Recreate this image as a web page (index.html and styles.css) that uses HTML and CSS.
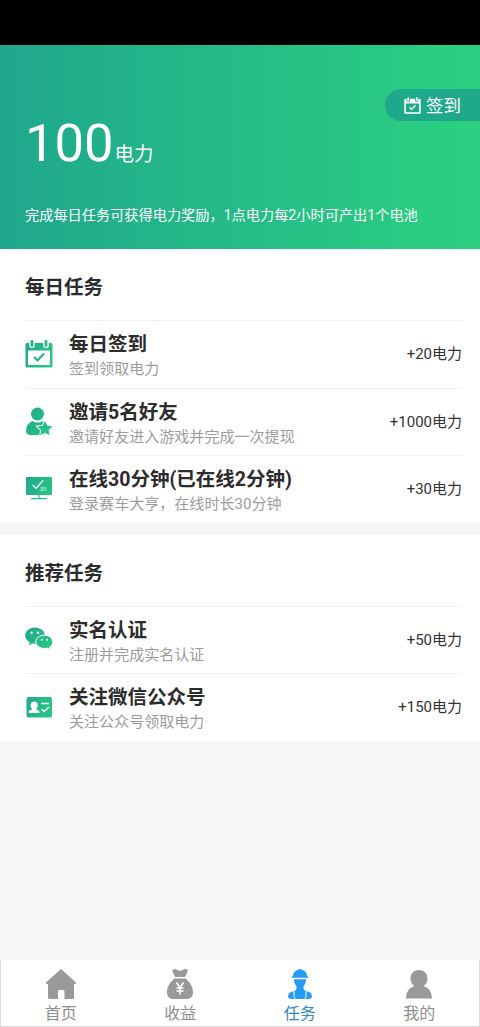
FILE: index.html
```html
<!DOCTYPE html>
<html lang="zh-CN">
<head>
<meta charset="utf-8">
<title>每日任务</title>
<link rel="stylesheet" href="styles.css">
</head>
<body>
<svg class="defs" width="0" height="0">
  <defs>
    <linearGradient id="g" gradientUnits="userSpaceOnUse" x1="0" y1="8" x2="28" y2="22"><stop offset="0" stop-color="#20a98b"/><stop offset="1" stop-color="#2aca82"/></linearGradient>
    <symbol id="calendar" viewBox="0 0 28 30">
      <path fill-rule="evenodd" d="M2 4H4.2V6.5a2.8 2.8 0 0 0 5.6 0V4h8.4v2.500a2.800 2.800 0 0 0 5.600 0V4H26a1.500 1.500 0 0 1 1.500 1.500V27a1.500 1.500 0 0 1-1.500 1.500H2A1.500 1.500 0 0 1 .5 27V5.500A1.500 1.500 0 0 1 2 4ZM3 11.500V26H25V11.500Z"/>
      <rect x="5.600" y="1" width="2.800" height="7" rx="1.400"/><rect x="19.600" y="1" width="2.800" height="7" rx="1.400"/>
      <path class="tick" d="M9 18l3.500 3.500 6.500-7"/>
    </symbol>
  </defs>
</svg>
<div class="app">
  <div class="status"></div>
  <header class="hero">
    <button class="sign"><svg class="sign-icon" viewBox="0 0 28 30"><use href="#calendar"/></svg><span class="sign-text">签到</span></button>
    <div class="power"><span class="power-num">100</span><span class="power-unit">电力</span></div>
    <p class="hint">完成每日任务可获得电力奖励，1点电力每2小时可产出1个电池</p>
  </header>
  <main class="main">
    <section class="card">
      <h2 class="card-title">每日任务</h2>
      <div class="task">
        <svg class="icon" viewBox="0 0 28 30" fill="url(#g)"><use href="#calendar"/></svg>
        <div class="info"><h3 class="name">每日签到</h3><p class="sub">签到领取电力</p></div>
        <span class="reward">+20电力</span>
      </div>
      <div class="task">
        <svg class="icon" viewBox="0 0 28 30" fill="url(#g)">
          <circle cx="12.500" cy="7" r="6.500"/>
          <path d="M7.500 14Q12.500 17 17.500 14L20 15.500V28H6Q1 28 1 23.500 1 17 7.500 14Z"/>
          <path class="star" d="M20 14l2.300 4.700 5.200.7-3.800 3.700.9 5.200-4.600-2.500-4.700 2.500.9-5.200-3.800-3.700 5.200-.7Z"/>
        </svg>
        <div class="info"><h3 class="name">邀请5名好友</h3><p class="sub">邀请好友进入游戏并完成一次提现</p></div>
        <span class="reward">+1000电力</span>
      </div>
      <div class="task">
        <svg class="icon" viewBox="0 0 28 30" fill="url(#g)">
          <rect x="1" y="2" width="26" height="18" rx=".8"/><path d="M13.400 20h1.200v3h7.200v1.200H6.200V23h7.200Z"/>
          <path class="screen-tick" d="M7.500 10l3.700 3.300 7-8"/><text class="screen-num" x="14.500" y="15.500">30</text>
        </svg>
        <div class="info"><h3 class="name">在线30分钟(已在线2分钟)</h3><p class="sub">登录赛车大亨，在线时长30分钟</p></div>
        <span class="reward">+30电力</span>
      </div>
    </section>
    <section class="card compact">
      <h2 class="card-title">推荐任务</h2>
      <div class="task">
        <svg class="icon" viewBox="0 0 28 30" fill="url(#g)">
          <path d="M10 2.500c5.500 0 10 3.600 10 8.100s-4.500 8.200-10 8.200l-2.600-.4L4 20.500l.7-3.300C2 15.800.2 13.500.2 10.600.2 6.100 4.500 2.500 10 2.500Z"/>
          <path class="bubble" d="M19.300 10.200c4.900 0 8.400 3 8.400 6.700 0 2.300-1.200 4.100-3 5.300l.5 2.300-2.900-1.300c-6.100 1.200-11.400-1.800-11.400-6.300 0-3.700 3.500-6.700 8.400-6.700Z"/>
          <g class="cut"><circle cx="6.500" cy="7.800" r="1.200"/><circle cx="13" cy="7.800" r="1.200"/><circle cx="16.800" cy="14.700" r="1"/><circle cx="22" cy="14.700" r="1"/></g>
        </svg>
        <div class="info"><h3 class="name">实名认证</h3><p class="sub">注册并完成实名认证</p></div>
        <span class="reward">+50电力</span>
      </div>
      <div class="task">
        <svg class="icon" viewBox="0 0 28 30" fill="url(#g)">
          <rect x="1.500" y="4" width="25.500" height="20.500" rx="2"/>
          <path class="cut" d="M9.200 8.500c2.300 0 3.600 1.600 3.600 3.700 0 1.800-.8 2.700-1.500 3.600l.4.900c2 .4 2.800.9 2.800 3.300H3.700c0-2.400.8-2.900 3-3.300l.4-.9c-.8-.9-1.500-1.800-1.500-3.600C5.600 10.100 6.900 8.500 9.200 8.500Z"/>
          <path class="card-lines" d="M16 10.500h8M16.500 16l2.500 2.500 5-4.500"/>
        </svg>
        <div class="info"><h3 class="name">关注微信公众号</h3><p class="sub">关注公众号领取电力</p></div>
        <span class="reward">+150电力</span>
      </div>
    </section>
  </main>
  <nav class="tabs">
    <a class="tab"><svg class="tab-icon" viewBox="0 0 32 32"><path d="M16 1L31 14.500Q31.500 16 29.500 16H29V29.500Q29 31 27.500 31H19.500V23.500Q19.500 22 18 22H14.500Q13 22 13 23.500V31H4.500Q3 31 3 29.500V16H2.500Q.5 16 1 14.500Z"/></svg>首页</a>
    <a class="tab"><svg class="tab-icon" viewBox="0 0 32 32"><path d="M9 1.500Q11 .5 13 1.800 16 3.800 19 1.800 21.500.5 23.500 1.500 24.500 3 22.500 5.500L21 9H11L9.500 5.500Q7.500 3 9 1.500ZM10.500 10.500h11C26 14 29 19 29 24.500 29 29 26 31 22 31H10C6 31 3 29 3 24.500 3 19 6 14 10.500 10.500Z"/><path class="yen" d="M12.500 14.500l3.500 5 3.500-5M16 19.500v7M12.500 20h7M12.500 23h7"/></svg>收益</a>
    <a class="tab active"><svg class="tab-icon" viewBox="0 0 32 32"><path d="M14 1.800Q16 0 18 1.800 23 3.500 23 8 25 8.500 24.500 9.800H7.500Q7 8.500 9 8 9 3.500 14 1.800ZM9.800 11.300h12.400Q22 16 19.500 18.500v2.500q1 1.500 2.500 2 6 1 6 6Q27 31 24.500 31h-17Q5 31 4 29 4 24 10 23q1.500-.5 2.500-2V18.500Q10 16 9.800 11.300Z"/><path class="straps" d="M10 23v5.500l1 2.500M22 23v5.500l-1 2.500"/></svg>任务</a>
    <a class="tab"><svg class="tab-icon" viewBox="0 0 32 32"><path d="M16 2c5 0 8.500 3.500 8.500 8.500 0 3.200-1.200 5.500-3.500 7v.8c5 1.500 7.700 5.700 8 12.200H3c.3-6.500 3-10.700 8-12.200v-.8c-2.300-1.500-3.500-3.800-3.500-7C7.500 5.500 11 2 16 2Z"/></svg>我的</a>
  </nav>
</div>
</body>
</html>
```
FILE: styles.css
```css
* { box-sizing: border-box; margin: 0; padding: 0; }
body { font-family: Roboto, "Noto Sans CJK SC", sans-serif; color: #2c2c2c; }
.defs { position: absolute; }
.app { height: 1027px; display: flex; flex-direction: column; background: #f6f6f6; }
.status { height: 45px; background: #000; }
.hero { height: 204px; padding: 44px 0 0 25px; display: flex; flex-direction: column; color: #fff; background: linear-gradient(90deg, #1fa78c, #2bd181); }
.sign { align-self: flex-end; width: 95px; height: 32px; padding-left: 19px; display: flex; align-items: center; gap: 5px; border: 0; border-radius: 16px 0 0 16px; background: #1ea98a; color: #fff; font: inherit; font-size: 17.5px; white-space: nowrap; }
.sign-text { padding-bottom: 2px; }
.sign-icon { width: 17px; height: 19px; flex: none; fill: #fff; color: #fff; }
.power { height: 63px; margin-top: -9px; display: flex; align-items: baseline; line-height: 63px; }
.power-num { font-size: 52.5px; }
.power-unit { font-size: 19.500px; margin-left: 1px; }
.hint { margin-top: 30px; font-size: 14.200px; line-height: 20px; white-space: nowrap; }
.main { flex: 1; display: flex; flex-direction: column; gap: 12px; }
.card { padding: 0 18px 0 25px; background: #fff; }
.card-title { height: 71px; line-height: 77px; font-size: 19.500px; font-weight: 700; }
.task { height: 67.700px; display: flex; align-items: center; border-top: 1px solid #f2f2f2; }
.compact .task { height: 67.300px; }
.icon { width: 28px; height: 30px; margin-right: 16px; flex: none; color: #29b681; }
.tick { fill: none; stroke: currentColor; stroke-width: 2.200; }
.info { flex: 1; padding-top: 4.500px; }
.name { font-size: 19.500px; font-weight: 700; line-height: 25px; }
.sub { font-size: 15.050px; line-height: 24px; color: #9c9c9c; font-weight: 400; }
.reward { padding-bottom: 4px; font-size: 15px; color: #333; }
.star { stroke: #fff; stroke-width: 2; paint-order: stroke; }
.screen-tick { fill: none; stroke: #fff; stroke-width: 1.300; }
.screen-num { fill: #d5f4e8; font-size: 6px; }
.bubble { stroke: #fff; stroke-width: 1; }
.cut { fill: #fff; }
.card-lines { fill: none; stroke: #fff; stroke-width: 1.600; }
.tabs { height: 67px; display: flex; background: #fff; border: 1px solid #ddd; border-top: 0; }
.tab { flex: 1; padding-top: 8px; display: flex; flex-direction: column; align-items: center; font-size: 16px; line-height: 28px; color: #8d8d8d; }
.tab-icon { width: 32px; height: 32px; flex: none; fill: #999; }
.active { color: #3487ca; }
.active .tab-icon { fill: #259bf3; }
.yen { fill: none; stroke: #fff; stroke-width: 1.600; }
.straps { fill: none; stroke: #fff; stroke-width: 1; }
```
